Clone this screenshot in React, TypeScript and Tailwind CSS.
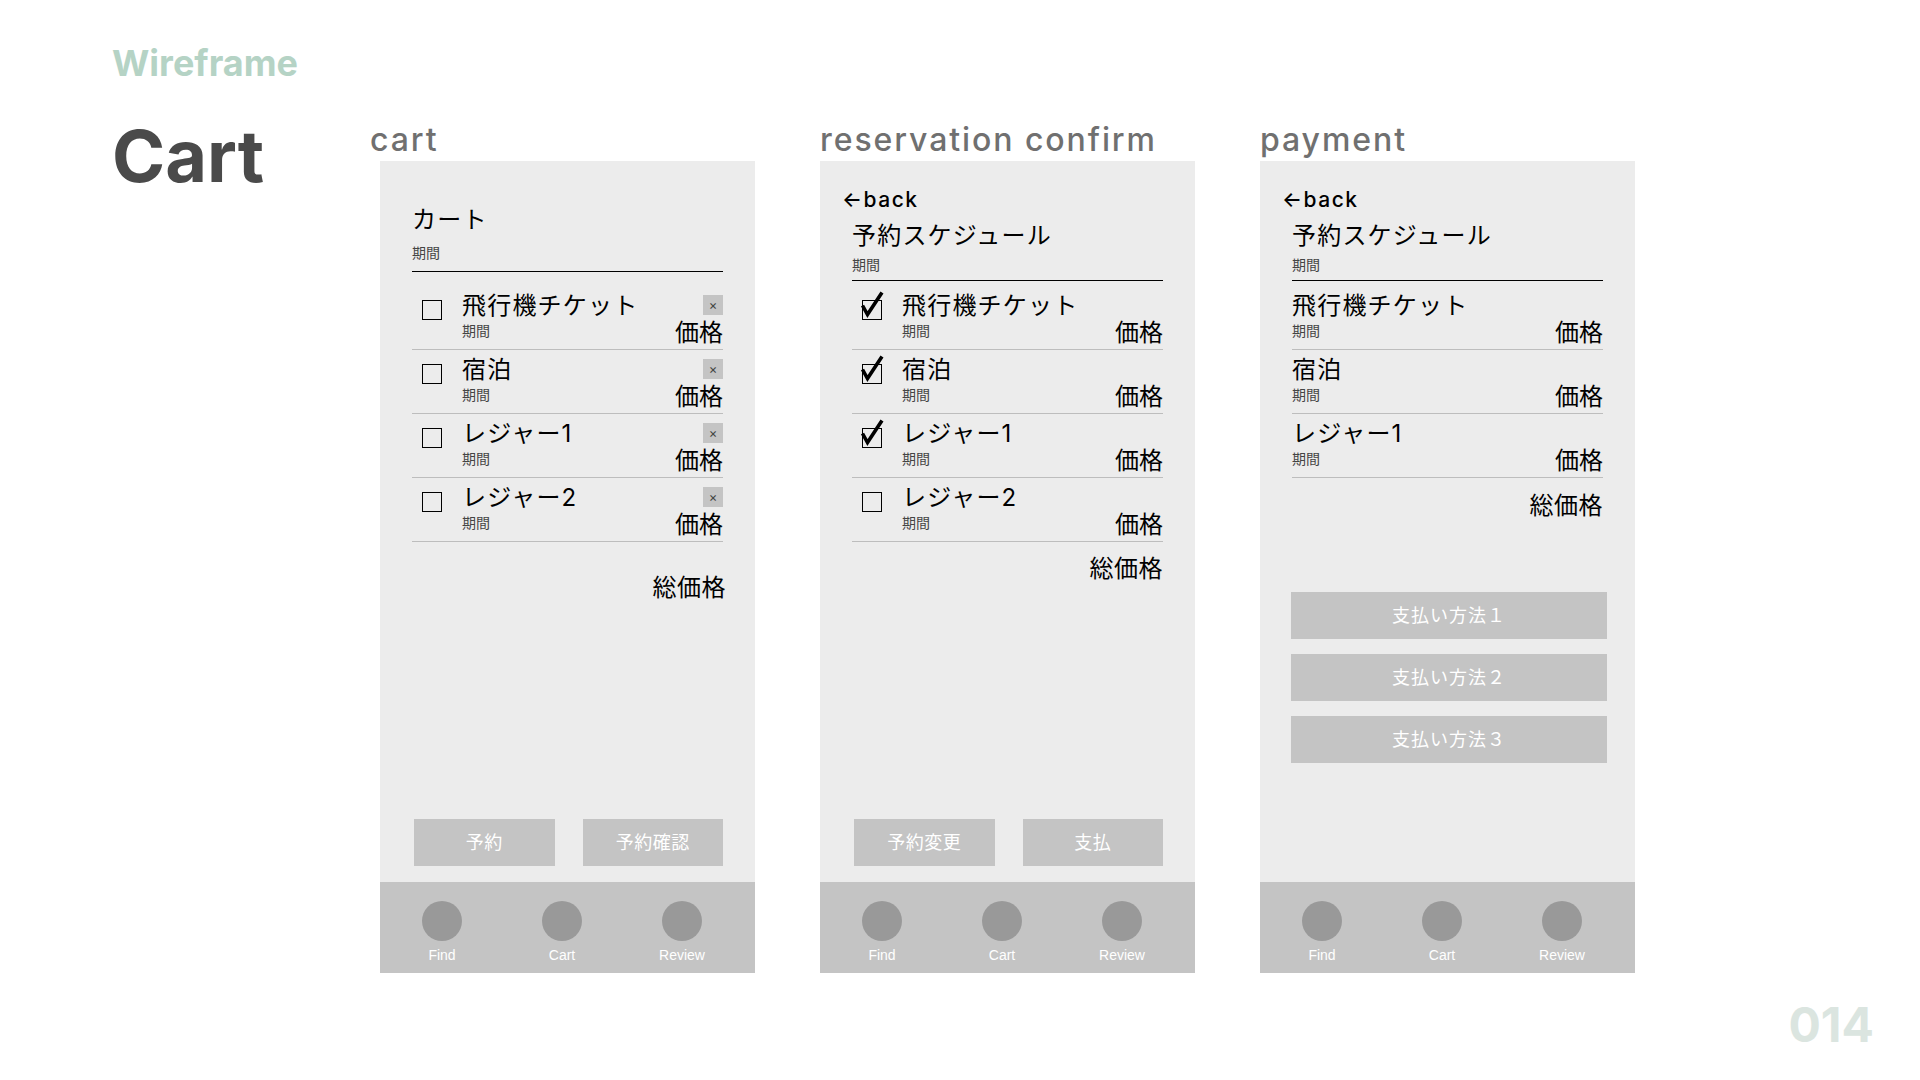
import React from 'react';

// wireframe slide: cart flow

type Check = 'on' | 'off' | undefined;

interface RowItem {
  title: string;
  check?: Check;
}

function CheckBox({ on }: { on?: boolean }) {
  return (
    <div className="relative w-[20px] h-[20px] border border-black">
      {on && (
        <svg className="absolute left-[-3px] top-[-11px]" width="28" height="32" viewBox="-2 -10 28 32">
          <path d="M0.5 5.5 L5.5 14.5 L20 -7.5" fill="none" stroke="#000" strokeWidth="3.6" strokeLinejoin="miter" />
        </svg>
      )}
    </div>
  );
}

function Row({ title, check, del }: { title: string; check?: Check; del?: boolean }) {
  return (
    <div className="flex h-[64px] border-b border-[#bdbdbd]">
      {check && (
        <div className="w-[50px] shrink-0 pl-[10px] pt-[14px]">
          <CheckBox on={check === 'on'} />
        </div>
      )}
      <div className="flex-1">
        <div className="mt-[8px] text-[24px] leading-[24px] tracking-[1.2px] text-black">{title}</div>
        <div className="mt-[6px] text-[14px] leading-[14px] text-[#444]">期間</div>
      </div>
      <div className="flex flex-col items-end">
        {del && (
          <div className="mt-[9px] w-[20px] h-[20px] bg-[#c4c4c4] flex items-center justify-center text-[13px] leading-none text-[#444]">×</div>
        )}
        <div className={del ? 'mt-[6px] text-[24px] leading-[24px] text-black' : 'mt-[35px] text-[24px] leading-[24px] text-black'}>価格</div>
      </div>
    </div>
  );
}

function BackHeader() {
  return (
    <>
      <div className="pt-[29px] -ml-[10px] text-[21px] leading-[20px] tracking-[1.5px] font-medium text-black">←back</div>
      <div className="mt-[14px] text-[24px] leading-[24px] tracking-[1.2px] text-black">予約スケジュール</div>
      <div className="mt-[10px] text-[14px] leading-[14px] text-[#444]">期間</div>
      <div className="mt-[8px] h-px bg-black" />
    </>
  );
}

function NavBar() {
  return (
    <div className="h-[91px] bg-[#c4c4c4] flex pl-[2px] pt-[19px]">
      {['Find', 'Cart', 'Review'].map(n => (
        <div key={n} className="w-[120px] flex flex-col items-center">
          <div className="w-[40px] h-[40px] rounded-full bg-[#999999]" />
          <div className="mt-[7px] text-[14px] leading-[14px] text-white font-['Liberation_Sans',Arial,sans-serif]">{n}</div>
        </div>
      ))}
    </div>
  );
}

function ActionButtons({ labels }: { labels: string[] }) {
  return (
    <div className="mt-auto mb-[16px] pl-[2px] flex gap-[28px]">
      {labels.map(l => (
        <div key={l} className="w-[141px] h-[47px] bg-[#c4c4c4] flex items-center justify-center text-[18px] tracking-[0.5px] text-white">{l}</div>
      ))}
    </div>
  );
}

function Frame({ label, offset, children }: { label: string; offset?: boolean; children: React.ReactNode }) {
  return (
    <div className="flex flex-col">
      <div className={offset
        ? '-ml-[10px] -mt-[1px] h-[33px] text-[32px] leading-[32px] tracking-[0.06em] text-[#707070] font-medium'
        : '-mt-[1px] h-[33px] text-[32px] leading-[32px] tracking-[0.06em] text-[#707070] font-medium'}>{label}</div>
      <div className="mt-[4px] w-[375px] h-[812px] bg-[#ececec] flex flex-col">
        <div className="flex-1 flex flex-col px-[32px]">{children}</div>
        <NavBar />
      </div>
    </div>
  );
}

const ITEMS = ['飛行機チケット', '宿泊', 'レジャー1', 'レジャー2'];
const CONFIRM: RowItem[] = [
  { title: '飛行機チケット', check: 'on' },
  { title: '宿泊', check: 'on' },
  { title: 'レジャー1', check: 'on' },
  { title: 'レジャー2', check: 'off' },
];

export default function App() {
  return (
    <div className="w-[1920px] h-[1080px] bg-white flex flex-col font-[Inter,'Noto_Sans_CJK_JP',sans-serif]">
      <div className="flex">
        {/* title block */}
        <div className="w-[380px] shrink-0 pl-[112px] pt-[45px]">
          <div className="text-[36px] leading-[36px] font-bold text-[#b5d3c5]">Wireframe</div>
          <div className="mt-[39px] text-[72px] leading-[72px] font-bold text-[#4a4a4a]">Cart</div>
        </div>

        <div className="flex gap-[65px] pt-[125px]">
          {/* cart */}
          <Frame label="cart" offset>
            <div className="pt-[47px] text-[24px] leading-[24px] tracking-[1.2px] text-black">カート</div>
            <div className="mt-[14px] text-[14px] leading-[14px] text-[#444]">期間</div>
            <div className="mt-[11px] h-px bg-black" />
            <div className="mt-[14px]">
              {ITEMS.map(t => <Row key={t} title={t} check="off" del />)}
            </div>
            <div className="mt-[34px] -mr-[3px] self-end text-[24px] leading-[24px] tracking-[0.5px] text-black">総価格</div>
            <ActionButtons labels={['予約', '予約確認']} />
          </Frame>

          {/* reservation confirm */}
          <Frame label="reservation confirm">
            <BackHeader />
            <div className="mt-[5px]">
              {CONFIRM.map(r => <Row key={r.title} title={r.title} check={r.check} />)}
            </div>
            <div className="mt-[15px] self-end text-[24px] leading-[24px] tracking-[0.5px] text-black">総価格</div>
            <ActionButtons labels={['予約変更', '支払']} />
          </Frame>

          {/* payment */}
          <Frame label="payment">
            <BackHeader />
            <div className="mt-[5px]">
              {ITEMS.slice(0, 3).map(t => <Row key={t} title={t} />)}
            </div>
            <div className="mt-[16px] self-end text-[24px] leading-[24px] tracking-[0.5px] text-black">総価格</div>
            <div className="mt-[74px] -ml-[1px] flex flex-col gap-[15px]">
              {['支払い方法１', '支払い方法２', '支払い方法３'].map(p => (
                <div key={p} className="w-[316px] h-[47px] bg-[#c4c4c4] flex items-center justify-center text-[18px] tracking-[1px] text-white">{p}</div>
              ))}
            </div>
          </Frame>
        </div>
      </div>

      <div className="mt-[28px] pr-[46px] flex justify-end">
        <div className="text-[48px] leading-[48px] font-bold text-[#dbe5e0]">014</div>
      </div>
    </div>
  );
}
